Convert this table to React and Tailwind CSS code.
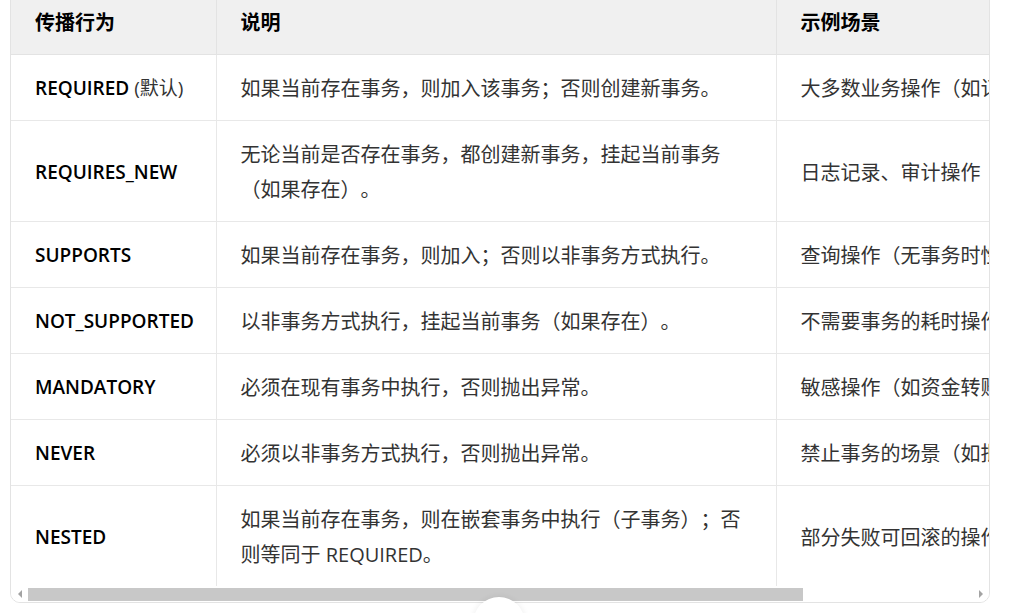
const rows = [
    {
        name: "REQUIRED",
        extra: "(默认)",
        desc: ["如果当前存在事务，则加入该事务；否则创建新事务。"],
        example: "大多数业务操作（如订单创建、更新）",
    },
    {
        name: "REQUIRES_NEW",
        desc: ["无论当前是否存在事务，都创建新事务，挂起当前事务", "（如果存在）。"],
        example: "日志记录、审计操作",
    },
    {
        name: "SUPPORTS",
        desc: ["如果当前存在事务，则加入；否则以非事务方式执行。"],
        example: "查询操作（无事务时性能更高）",
    },
    {
        name: "NOT_SUPPORTED",
        desc: ["以非事务方式执行，挂起当前事务（如果存在）。"],
        example: "不需要事务的耗时操作（如批量导出）",
    },
    {
        name: "MANDATORY",
        desc: ["必须在现有事务中执行，否则抛出异常。"],
        example: "敏感操作（如资金转账）",
    },
    {
        name: "NEVER",
        desc: ["必须以非事务方式执行，否则抛出异常。"],
        example: "禁止事务的场景（如批量查询）",
    },
    {
        name: "NESTED",
        desc: ["如果当前存在事务，则在嵌套事务中执行（子事务）；否", "则等同于 REQUIRED。"],
        example: "部分失败可回滚的操作（如批量处理）",
    },
];

const App = () => {
    return (
        <div
            className="relative h-[613px] w-[1028px] overflow-hidden bg-white [text-spacing-trim:space-all]"
            style={{ fontFamily: '"Open Sans", "Noto Sans CJK SC", sans-serif' }}
        >
            <div className="pl-[10px] -mt-[12px]">
                {/* Table wrapper */}
                <div className="w-[980px] border border-[#e3e3e3] rounded-[10px] overflow-hidden bg-white">
                    <div className="overflow-hidden">
                        <table className="w-[1190px] table-fixed border-collapse text-[20px] leading-[35px]">
                            <colgroup>
                                <col className="w-[205px]" />
                                <col className="w-[560px]" />
                                <col className="w-[425px]" />
                            </colgroup>
                            <thead>
                                <tr className="bg-[#f0f0f0]">
                                    <th className="border-b border-r border-[#e3e3e3] px-6 pt-[16px] pb-[14px] text-left font-bold text-black">传播行为</th>
                                    <th className="border-b border-r border-[#e3e3e3] px-6 pt-[16px] pb-[14px] text-left font-bold text-black">说明</th>
                                    <th className="border-b border-[#e3e3e3] px-6 pt-[16px] pb-[14px] text-left font-bold text-black">示例场景</th>
                                </tr>
                            </thead>
                            <tbody>
                                {rows.map((row) => (
                                    <tr key={row.name}>
                                        <td className="border-b border-r border-[#e8e8e8] px-6 pt-[16px] pb-[14px] text-[19px] font-semibold text-black">
                                            {row.name}
                                            {row.extra && (
                                                <span className="font-normal text-[#333]"> {row.extra}</span>
                                            )}
                                        </td>
                                        <td className="border-b border-r border-[#e8e8e8] px-6 pt-[16px] pb-[14px] text-[#333]">
                                            {row.desc.map((line, i) => (
                                                <div key={i} className="whitespace-nowrap">{line}</div>
                                            ))}
                                        </td>
                                        <td className="border-b border-[#e8e8e8] px-6 pt-[16px] pb-[14px] whitespace-nowrap text-[#333]">
                                            {row.example}
                                        </td>
                                    </tr>
                                ))}
                            </tbody>
                        </table>
                    </div>

                    {/* Horizontal scrollbar */}
                    <div className="flex h-[16px] items-center -mt-px bg-white">
                        <div className="flex w-[17px] items-center justify-center">
                            <div className="h-0 w-0 border-y-[4px] border-r-[4px] border-y-transparent border-r-[#a3a3a3]" />
                        </div>
                        <div className="flex-1 h-[13px]">
                            <div className="h-full w-[775px] bg-[#c8c8c8]" />
                        </div>
                        <div className="flex w-[17px] items-center justify-center">
                            <div className="h-0 w-0 border-y-[4px] border-l-[4px] border-y-transparent border-l-[#a3a3a3]" />
                        </div>
                    </div>
                </div>
            </div>

            {/* Floating round button */}
            <div className="absolute left-[473px] top-[597px] h-[52px] w-[52px] rounded-full bg-white shadow-[0_0_6px_rgba(0,0,0,0.08)]" />
        </div>
    );
};

export default App;
